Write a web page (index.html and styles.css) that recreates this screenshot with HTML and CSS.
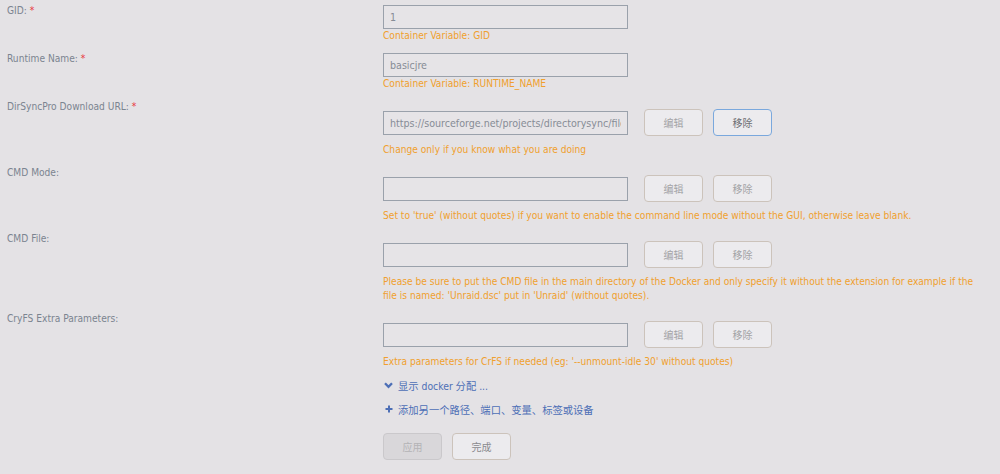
FILE: index.html
```html
<!DOCTYPE html>
<html lang="zh">
<head>
    <meta charset="UTF-8">
    <meta name="viewport" content="width=device-width, initial-scale=1.0">
    <title>Edit Container</title>
    <link rel="stylesheet" href="styles.css">
</head>
<body>
    <form class="settings">
        <div class="row">
            <div class="label">GID: <span class="req">*</span></div>
            <div class="field">
                <div class="controls"><input class="text" type="text" value="1"></div>
                <div class="help">Container Variable: GID</div>
            </div>
        </div>

        <div class="row">
            <div class="label">Runtime Name: <span class="req">*</span></div>
            <div class="field">
                <div class="controls"><input class="text" type="text" value="basicjre"></div>
                <div class="help">Container Variable: RUNTIME_NAME</div>
            </div>
        </div>

        <div class="row">
            <div class="label">DirSyncPro Download URL: <span class="req">*</span></div>
            <div class="field">
                <div class="controls with-buttons">
                    <input class="text" type="text" value="https://sourceforge.net/projects/directorysync/files/DirSync%20Pro">
                    <button type="button" class="btn">编辑</button>
                    <button type="button" class="btn focused">移除</button>
                </div>
                <div class="help">Change only if you know what you are doing</div>
            </div>
        </div>

        <div class="row">
            <div class="label">CMD Mode:</div>
            <div class="field">
                <div class="controls with-buttons">
                    <input class="text" type="text" value="">
                    <button type="button" class="btn">编辑</button>
                    <button type="button" class="btn">移除</button>
                </div>
                <div class="help">Set to 'true' (without quotes) if you want to enable the command line mode without the GUI, otherwise leave blank.</div>
            </div>
        </div>

        <div class="row">
            <div class="label">CMD File:</div>
            <div class="field">
                <div class="controls with-buttons">
                    <input class="text" type="text" value="">
                    <button type="button" class="btn">编辑</button>
                    <button type="button" class="btn">移除</button>
                </div>
                <div class="help">Please be sure to put the CMD file in the main directory of the Docker and only specify it without the extension for example if the file is named: 'Unraid.dsc' put in 'Unraid' (without quotes).</div>
            </div>
        </div>

        <div class="row">
            <div class="label">CryFS Extra Parameters:</div>
            <div class="field">
                <div class="controls with-buttons">
                    <input class="text" type="text" value="">
                    <button type="button" class="btn">编辑</button>
                    <button type="button" class="btn">移除</button>
                </div>
                <div class="help">Extra parameters for CrFS if needed (eg: '--unmount-idle 30' without quotes)</div>
            </div>
        </div>

        <div class="row">
            <div class="label"></div>
            <div class="field">
                <a class="link" href="#">
                    <span class="icon"><svg width="9" height="7" viewBox="0 0 9 7"><path d="M1 1.2 L4.5 4.8 L8 1.2" fill="none" stroke="currentColor" stroke-width="2.3"/></svg></span>
                    显示 docker 分配 ...
                </a>
                <a class="link" href="#">
                    <span class="icon"><svg width="8" height="8" viewBox="0 0 8 8"><path d="M4 0.5 V7.5 M0.5 4 H7.5" fill="none" stroke="currentColor" stroke-width="2"/></svg></span>
                    添加另一个路径、端口、变量、标签或设备
                </a>
                <div class="actions">
                    <button type="button" class="btn wide" disabled>应用</button>
                    <button type="button" class="btn wide">完成</button>
                </div>
            </div>
        </div>
    </form>
</body>
</html>
```
FILE: styles.css
```css
body {
    margin: 0;
    padding: 0;
    background-color: #e4e2e5;
    font-family: "DejaVu Sans Condensed", "DejaVu Sans", "Noto Sans CJK SC", sans-serif;
    font-size: 10.15px;
    color: #7b8490;
}
.settings {
    padding: 4px 25px 0 7px;
}
.row {
    display: flex;
    margin-bottom: 9px;
}
.label {
    flex: 0 0 376px;
    line-height: 14px;
}
.req {
    color: #e8333c;
}
.field {
    flex: 1;
    min-width: 0;
}
.controls {
    display: flex;
    align-items: center;
    padding-top: 1px;
}
.controls.with-buttons {
    padding-top: 9px;
    padding-bottom: 7px;
}
.text {
    box-sizing: border-box;
    width: 245px;
    height: 24px;
    margin: 0;
    padding: 0 6px;
    border: 1px solid #9aa1ab;
    background-color: #e6e4e7;
    font: inherit;
    font-size: 10.6px;
    color: #868c96;
    outline: none;
}
.btn {
    box-sizing: border-box;
    width: 59px;
    height: 27px;
    margin: 0 0 0 10px;
    padding: 0;
    border: 1px solid #ccc3bb;
    border-radius: 4px;
    background-color: #ecebee;
    font-family: "Noto Sans CJK SC", sans-serif;
    font-size: 10px;
    color: #a3a3a6;
}
.controls .text + .btn {
    margin-left: 16px;
}
.btn.focused {
    border-color: #7aa8dd;
    color: #6c6e73;
}
.help {
    line-height: 14px;
    color: #f0a02e;
}
.link {
    display: flex;
    align-items: center;
    height: 24px;
    color: #4d6fb6;
    text-decoration: none;
    font-family: "DejaVu Sans Condensed", "Noto Sans CJK SC", sans-serif;
    font-size: 10.3px;
}
.link:first-child {
    margin-top: -5px;
}
.icon {
    display: flex;
    justify-content: center;
    width: 11px;
    margin-right: 4px;
}
.actions {
    display: flex;
    margin-top: 12px;
}
.actions .btn {
    margin: 0 10px 0 0;
}
.btn:disabled {
    background-color: #d9d7da;
    border-color: #cac8cb;
    color: #b4b3b6;
}
.btn.wide:not(:disabled) {
    color: #8a8a8e;
}
```
